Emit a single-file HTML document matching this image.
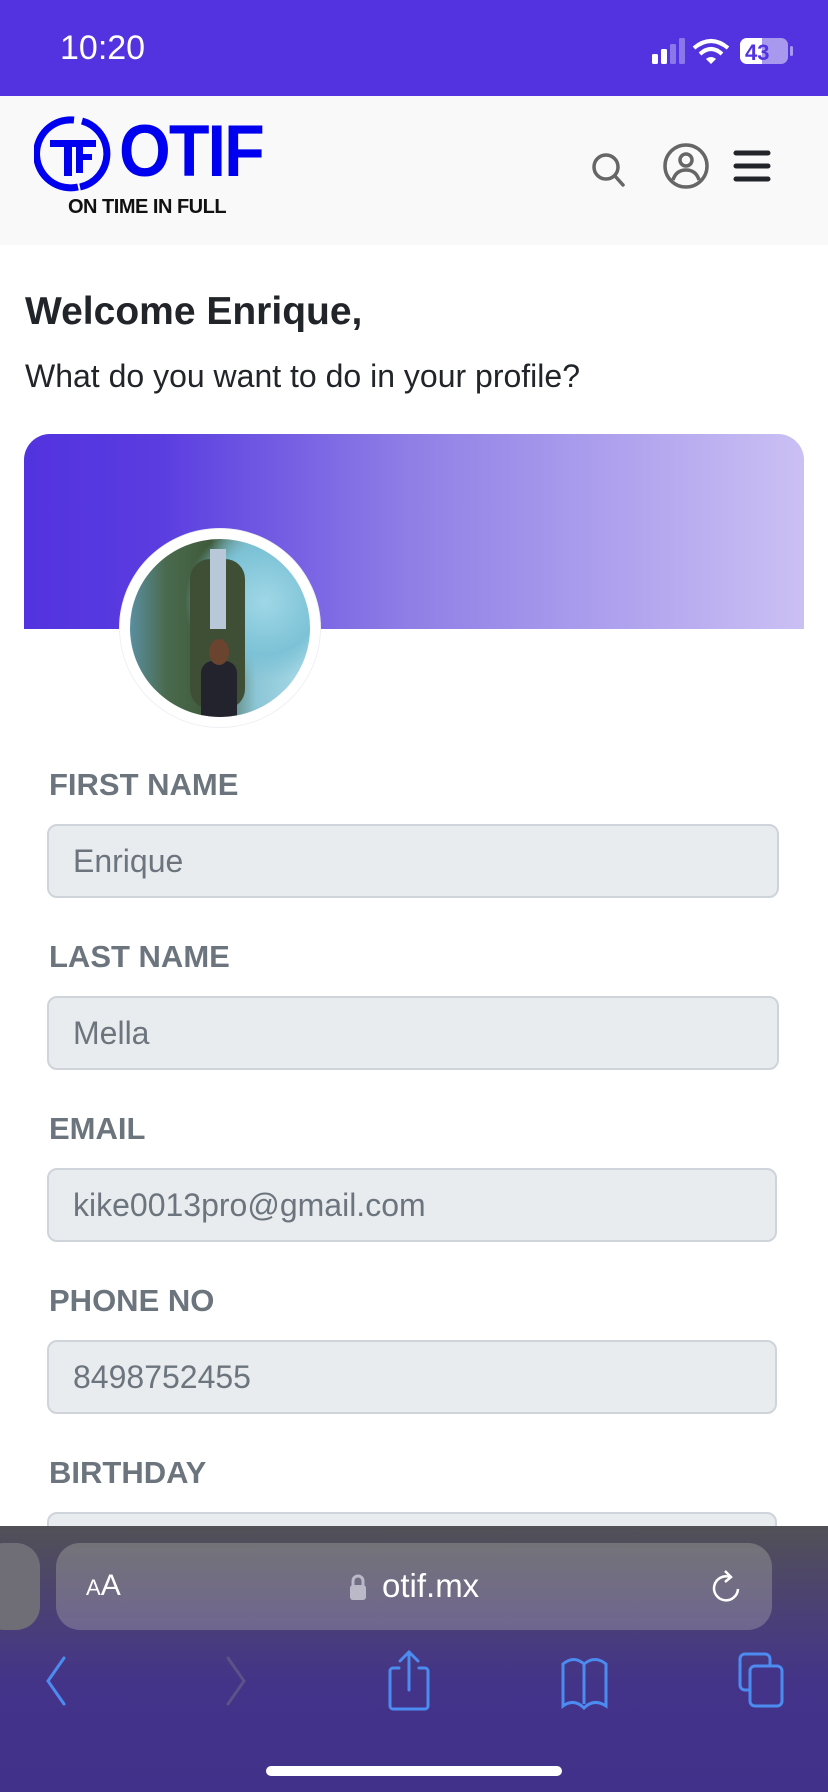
<!DOCTYPE html>
<html><head><meta charset="utf-8"><style>
*{margin:0;padding:0;box-sizing:border-box}
body{width:828px;height:1792px;overflow:hidden;background:#fff;font-family:"Liberation Sans",sans-serif;position:relative}
.status{position:absolute;left:0;top:0;width:828px;height:96px;background:#5233df;color:#fff}
.header{position:absolute;left:0;top:96px;width:828px;height:149px;background:#f9f9f9}
h1{position:absolute;left:25px;top:290px;font-size:39px;font-weight:bold;color:#212529}
.sub{position:absolute;left:25px;top:358px;font-size:32px;color:#212529}
.banner{position:absolute;left:24px;top:434px;width:780px;height:195px;border-radius:26px 26px 0 0;background:linear-gradient(90deg,#5233df 0%,#5a3ce0 17%,#9080e6 50%,#cbc0f4 100%)}
.avatar{position:absolute;left:120px;top:529px;width:200px;height:198px;border-radius:50%;background:#fff;box-shadow:0 0 0 1px #eef0f3}
.photo{position:absolute;left:10px;top:10px;width:180px;height:178px;border-radius:50%;overflow:hidden;background:radial-gradient(circle at 75% 35%,#9fd7e6 0,#7cc2d6 30%,transparent 45%),linear-gradient(90deg,#5a8fa0 0%,#4a6a4e 20%,#3f5a3a 45%,#8cc6d6 70%,#a9dbe8 100%)}
.lbl{position:absolute;left:49px;font-size:31px;font-weight:bold;color:#6c757d}
.inp{position:absolute;left:47px;width:732px;height:74px;background:#e9ecef;border:2px solid #ced4da;border-radius:10px;font-size:32px;color:#6c757d;padding-left:24px;line-height:70px}
.bottom{position:absolute;left:0;top:1526px;width:828px;height:266px;background:linear-gradient(180deg,#525156 0%,#4a3f78 35%,#433389 60%,#42318a 100%)}
.url{position:absolute;left:56px;top:1543px;width:716px;height:87px;border-radius:24px;background:linear-gradient(180deg,#747378 0%,#6f6690 100%);color:#fff}
.stub{position:absolute;left:-20px;top:1543px;width:60px;height:87px;border-radius:24px;background:#6f6d76}
.home{position:absolute;left:266px;top:1766px;width:296px;height:10px;border-radius:5px;background:#fff}
</style></head><body>
<div class="status">
<div style="position:absolute;left:60px;top:29px;font-size:34px">10:20</div>
<svg style="position:absolute;left:650px;top:36px" width="145" height="30" viewBox="0 0 145 30">
<rect x="2" y="18" width="6" height="10" rx="1.5" fill="#fff"/><rect x="11" y="13" width="6" height="15" rx="1.5" fill="#fff"/><rect x="20" y="8" width="6" height="20" rx="1.5" fill="#8a78ea"/><rect x="29" y="2" width="6" height="26" rx="1.5" fill="#8a78ea"/>
<path d="M44 12 Q61 -2 78 12" stroke="#fff" stroke-width="4" fill="none"/><path d="M50 18 Q61 8 72 18" stroke="#fff" stroke-width="4" fill="none"/><path d="M56 23 L61 28 L66 23 Q61 19 56 23Z" fill="#fff"/>
<rect x="90" y="2" width="48" height="26" rx="7" fill="#a899ee"/><rect x="90" y="2" width="22" height="26" rx="7" fill="#fff"/><rect x="105" y="2" width="7" height="26" fill="#fff"/>
<text x="95" y="24" font-size="22" font-weight="bold" fill="#5233df" font-family="Liberation Sans">43</text>
<rect x="140" y="10" width="3" height="10" rx="1.5" fill="#a899ee"/></svg>
</div>
<div class="header">
<svg style="position:absolute;left:34px;top:18px" width="80" height="80" viewBox="0 0 80 80"><path d="M40 6 A34 34 0 1 0 44 73" stroke="#0000f0" stroke-width="7" fill="none"/><path d="M48 7 A34 34 0 0 1 46 73" stroke="#0000f0" stroke-width="7" fill="none"/><rect x="16" y="26" width="46" height="7" fill="#0000f0"/><rect x="30" y="26" width="8" height="36" fill="#0000f0"/><rect x="42" y="40" width="16" height="6" fill="#0000f0"/><rect x="42" y="33" width="7" height="26" fill="#0000f0"/></svg>
<div style="position:absolute;left:119px;top:18px;font-size:70px;font-weight:900;color:#0000f0;letter-spacing:-2px;line-height:70px;transform:scale(0.95,1.05);transform-origin:left top">OTIF</div>
<div style="position:absolute;left:68px;top:100px;font-size:20px;font-weight:bold;color:#111;letter-spacing:-0.5px">ON TIME IN FULL</div>
<svg style="position:absolute;left:590px;top:55px" width="40" height="40" viewBox="0 0 40 40"><circle cx="16" cy="16" r="12" stroke="#666" stroke-width="3.5" fill="none"/><path d="M25 25 L33 34" stroke="#666" stroke-width="3.5" stroke-linecap="round"/></svg>
<svg style="position:absolute;left:662px;top:46px" width="48" height="48" viewBox="0 0 48 48"><circle cx="24" cy="24" r="21" stroke="#666" stroke-width="3.5" fill="none"/><circle cx="24" cy="18" r="6" stroke="#666" stroke-width="3.5" fill="none"/><path d="M11 38 Q14 28 24 28 Q34 28 37 38" stroke="#666" stroke-width="3.5" fill="none"/></svg>
<svg style="position:absolute;left:732px;top:52px" width="40" height="36" viewBox="0 0 40 36"><path d="M4 5H36M4 18H36M4 31H36" stroke="#212529" stroke-width="5" stroke-linecap="round"/></svg>
</div>
<h1>Welcome Enrique,</h1>
<div class="sub">What do you want to do in your profile?</div>
<div class="banner"></div>
<div class="avatar"><div class="photo">
<div style="position:absolute;left:60px;top:20px;width:55px;height:150px;background:#3e4f36;border-radius:20px"></div>
<div style="position:absolute;left:80px;top:10px;width:16px;height:80px;background:#b8c8d8"></div>
<div style="position:absolute;left:71px;top:122px;width:36px;height:70px;background:#23232d;border-radius:12px 12px 0 0"></div>
<div style="position:absolute;left:79px;top:100px;width:20px;height:26px;background:#6b4430;border-radius:50%"></div>
</div></div>
<div class="lbl" style="top:767px">FIRST NAME</div>
<div class="inp" style="top:824px">Enrique</div>
<div class="lbl" style="top:939px">LAST NAME</div>
<div class="inp" style="top:996px">Mella</div>
<div class="lbl" style="top:1111px">EMAIL</div>
<div class="inp" style="top:1168px;width:730px">kike0013pro@gmail.com</div>
<div class="lbl" style="top:1283px">PHONE NO</div>
<div class="inp" style="top:1340px;width:730px">8498752455</div>
<div class="lbl" style="top:1455px">BIRTHDAY</div>
<div class="inp" style="top:1512px;width:730px"></div>
<div class="bottom"></div>
<div class="stub"></div>
<div class="url">
<div style="position:absolute;left:30px;top:26px;font-size:30px"><span style="font-size:22px">A</span>A</div>
<svg style="position:absolute;left:292px;top:30px" width="20" height="28" viewBox="0 0 20 28"><path d="M5 13V8a5 5 0 0 1 10 0v5" stroke="#bbb8c8" stroke-width="3" fill="none"/><rect x="2" y="12" width="16" height="15" rx="3" fill="#bbb8c8"/></svg>
<div style="position:absolute;left:326px;top:24px;font-size:33px">otif.mx</div>
<svg style="position:absolute;left:654px;top:26px" width="34" height="38" viewBox="0 0 34 38"><path d="M20 8 A12 12 0 1 0 28 20" stroke="#fff" stroke-width="2.5" fill="none"/><path d="M15 2 L21 8 L15 13" stroke="#fff" stroke-width="2.5" fill="none"/></svg>
</div>
<svg style="position:absolute;left:0;top:1650px" width="828" height="70" viewBox="0 0 828 70">
<path d="M64 8 L48 31 L64 54" stroke="#4c8bf0" stroke-width="3" fill="none" stroke-linecap="round"/>
<path d="M228 8 L244 31 L228 54" stroke="#5a5288" stroke-width="3" fill="none" stroke-linecap="round"/>
<path d="M399 18 H393 A3 3 0 0 0 390 21 V56 A3 3 0 0 0 393 59 H425 A3 3 0 0 0 428 56 V21 A3 3 0 0 0 425 18 H419 M409 40 V2 M400 11 L409 2 L418 11" stroke="#4c8bf0" stroke-width="3" fill="none" stroke-linecap="round"/>
<path d="M584 54 V14 Q574 5 563 14 V56 Q574 48 584 58 Q594 48 606 56 V14 Q595 5 584 14" stroke="#4c8bf0" stroke-width="3" fill="none"/>
<rect x="740" y="4" width="30" height="36" rx="5" stroke="#4c8bf0" stroke-width="3" fill="none"/>
<rect x="750" y="16" width="32" height="40" rx="5" stroke="#4c8bf0" stroke-width="3" fill="#433389"/>
</svg>
<div class="home"></div>
</body></html>
